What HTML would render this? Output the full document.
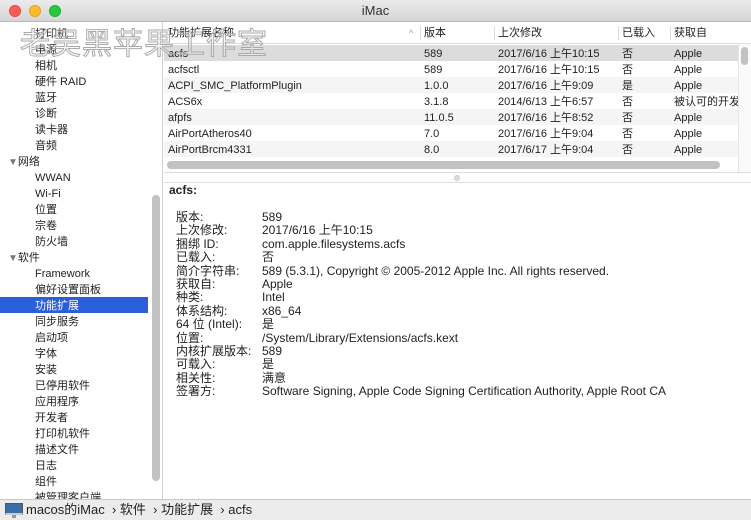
<!DOCTYPE html>
<html><head><meta charset="utf-8"><style>
*{margin:0;padding:0;box-sizing:border-box}
body{width:751px;height:520px;overflow:hidden;font-family:"Liberation Sans","Noto Sans CJK SC",sans-serif;font-size:11px;color:#222;background:#fff;position:relative}
.abs{position:absolute}
#title{left:0;top:0;width:751px;height:22px;background:linear-gradient(#ebebeb,#d6d6d6);border-bottom:1px solid #b8b8b8;text-align:center;line-height:22px;font-size:13px;color:#333;z-index:3}
.dot{position:absolute;top:5px;width:12px;height:12px;border-radius:6px}
#side{left:0;top:22px;width:163px;height:477px;background:#fff;border-right:1px solid #d0d0d0;overflow:hidden}
.si{position:absolute;left:35px;height:16px;line-height:16px;white-space:nowrap;padding-top:2px;line-height:14px}
.sh{left:8px}
.sel{left:0;width:148px;background:#2b5fd8;color:#fff;padding-left:35px}
#sthumb{left:152px;top:195px;width:8px;height:286px;border-radius:4px;background:#c2c2c2}
.cell{position:absolute;height:16px;line-height:16px;white-space:nowrap;overflow:hidden}
.row{position:absolute;left:164px;width:574px;height:16px}
.lab{position:absolute;left:176px;white-space:nowrap}
.val{position:absolute;left:262px;white-space:nowrap}
#wm{left:20px;top:19px;font-size:30px;letter-spacing:1px;color:rgba(255,255,255,0.3);-webkit-text-stroke:1px #aaa;z-index:4;font-family:"Noto Sans CJK SC",sans-serif}
#bar{left:0;top:499px;width:751px;height:21px;background:#ececec;border-top:1px solid #c8c8c8;font-size:13px;line-height:20px}
</style></head><body>
<div id="title" class="abs">iMac
<div class="dot" style="left:9px;background:#fc5f57;border:1px solid #df4742"></div>
<div class="dot" style="left:29px;background:#fdbc2e;border:1px solid #dea123"></div>
<div class="dot" style="left:49px;background:#28c840;border:1px solid #1eab2f"></div>
</div>
<div id="wm" class="abs">老吴黑苹果工作室</div>
<div id="side" class="abs">
<div class="si" style="top:3px">打印机</div>
<div class="si" style="top:19px">电源</div>
<div class="si" style="top:35px">相机</div>
<div class="si" style="top:51px">硬件 RAID</div>
<div class="si" style="top:67px">蓝牙</div>
<div class="si" style="top:83px">诊断</div>
<div class="si" style="top:99px">读卡器</div>
<div class="si" style="top:115px">音频</div>
<div class="si sh" style="top:131px"><span style="color:#777;font-size:10px">▼</span>网络</div>
<div class="si" style="top:147px">WWAN</div>
<div class="si" style="top:163px">Wi-Fi</div>
<div class="si" style="top:179px">位置</div>
<div class="si" style="top:195px">宗卷</div>
<div class="si" style="top:211px">防火墙</div>
<div class="si sh" style="top:227px"><span style="color:#777;font-size:10px">▼</span>软件</div>
<div class="si" style="top:243px">Framework</div>
<div class="si" style="top:259px">偏好设置面板</div>
<div class="si sel" style="top:275px">功能扩展</div>
<div class="si" style="top:291px">同步服务</div>
<div class="si" style="top:307px">启动项</div>
<div class="si" style="top:323px">字体</div>
<div class="si" style="top:339px">安装</div>
<div class="si" style="top:355px">已停用软件</div>
<div class="si" style="top:371px">应用程序</div>
<div class="si" style="top:387px">开发者</div>
<div class="si" style="top:403px">打印机软件</div>
<div class="si" style="top:419px">描述文件</div>
<div class="si" style="top:435px">日志</div>
<div class="si" style="top:451px">组件</div>
<div class="si" style="top:467px">被管理客户端</div>
</div>
<div id="sthumb" class="abs"></div>
<div class="abs" style="left:164px;top:23px;width:587px;height:21px;background:#fff;border-bottom:1px solid #ddd"></div>
<div class="cell" style="left:168px;top:25px">功能扩展名称</div>
<div class="cell" style="left:409px;top:25px;color:#999;font-size:9px">^</div>
<div class="abs" style="left:420px;top:26px;width:1px;height:14px;background:#ddd"></div>
<div class="cell" style="left:424px;top:25px">版本</div>
<div class="abs" style="left:494px;top:26px;width:1px;height:14px;background:#ddd"></div>
<div class="cell" style="left:498px;top:25px">上次修改</div>
<div class="abs" style="left:618px;top:26px;width:1px;height:14px;background:#ddd"></div>
<div class="cell" style="left:622px;top:25px">已载入</div>
<div class="abs" style="left:670px;top:26px;width:1px;height:14px;background:#ddd"></div>
<div class="cell" style="left:674px;top:25px">获取自</div>
<div class="row" style="top:45px;background:#dcdcdc"></div>
<div class="row" style="top:77px;background:#f5f5f5"></div>
<div class="row" style="top:109px;background:#f5f5f5"></div>
<div class="row" style="top:141px;background:#f5f5f5"></div>
<div style="position:absolute;left:0;top:46px;font-size:11px">
<div class="cell" style="left:168px;top:0">acfs</div><div class="cell" style="left:424px;top:0">589</div><div class="cell" style="left:498px;top:0">2017/6/16 上午10:15</div><div class="cell" style="left:622px;top:0">否</div><div class="cell" style="left:674px;top:0">Apple</div>
<div class="cell" style="left:168px;top:16px">acfsctl</div><div class="cell" style="left:424px;top:16px">589</div><div class="cell" style="left:498px;top:16px">2017/6/16 上午10:15</div><div class="cell" style="left:622px;top:16px">否</div><div class="cell" style="left:674px;top:16px">Apple</div>
<div class="cell" style="left:168px;top:32px">ACPI_SMC_PlatformPlugin</div><div class="cell" style="left:424px;top:32px">1.0.0</div><div class="cell" style="left:498px;top:32px">2017/6/16 上午9:09</div><div class="cell" style="left:622px;top:32px">是</div><div class="cell" style="left:674px;top:32px">Apple</div>
<div class="cell" style="left:168px;top:48px">ACS6x</div><div class="cell" style="left:424px;top:48px">3.1.8</div><div class="cell" style="left:498px;top:48px">2014/6/13 上午6:57</div><div class="cell" style="left:622px;top:48px">否</div><div class="cell" style="left:674px;top:48px;width:64px">被认可的开发者</div>
<div class="cell" style="left:168px;top:64px">afpfs</div><div class="cell" style="left:424px;top:64px">11.0.5</div><div class="cell" style="left:498px;top:64px">2017/6/16 上午8:52</div><div class="cell" style="left:622px;top:64px">否</div><div class="cell" style="left:674px;top:64px">Apple</div>
<div class="cell" style="left:168px;top:80px">AirPortAtheros40</div><div class="cell" style="left:424px;top:80px">7.0</div><div class="cell" style="left:498px;top:80px">2017/6/16 上午9:04</div><div class="cell" style="left:622px;top:80px">否</div><div class="cell" style="left:674px;top:80px">Apple</div>
<div class="cell" style="left:168px;top:96px">AirPortBrcm4331</div><div class="cell" style="left:424px;top:96px">8.0</div><div class="cell" style="left:498px;top:96px">2017/6/17 上午9:04</div><div class="cell" style="left:622px;top:96px">否</div><div class="cell" style="left:674px;top:96px">Apple</div>
</div>
<div class="abs" style="left:738px;top:44px;width:13px;height:130px;background:#fafafa;border-left:1px solid #e6e6e6"></div>
<div class="abs" style="left:741px;top:47px;width:7px;height:18px;border-radius:4px;background:#c2c2c2"></div>
<div class="abs" style="left:167px;top:161px;width:553px;height:8px;border-radius:4px;background:#c2c2c2"></div>
<div class="abs" style="left:164px;top:172px;width:587px;height:1px;background:#ddd"></div>
<div class="abs" style="left:164px;top:182px;width:587px;height:1px;background:#ddd"></div>
<div class="abs" style="left:454px;top:175px;width:6px;height:6px;border-radius:3px;background:#ddd;border:1px solid #ccc"></div>
<div class="abs" style="left:169px;top:183px;font-weight:bold;font-size:12px">acfs:</div>
<div style="position:absolute;left:0;top:211px;line-height:13.4px;font-size:12px">
<div class="lab" style="top:0">版本:</div><div class="val" style="top:0">589</div>
<div class="lab" style="top:13.4px">上次修改:</div><div class="val" style="top:13.4px">2017/6/16 上午10:15</div>
<div class="lab" style="top:26.8px">捆绑 ID:</div><div class="val" style="top:26.8px">com.apple.filesystems.acfs</div>
<div class="lab" style="top:40.2px">已载入:</div><div class="val" style="top:40.2px">否</div>
<div class="lab" style="top:53.6px">简介字符串:</div><div class="val" style="top:53.6px">589 (5.3.1), Copyright © 2005-2012 Apple Inc. All rights reserved.</div>
<div class="lab" style="top:67px">获取自:</div><div class="val" style="top:67px">Apple</div>
<div class="lab" style="top:80.4px">种类:</div><div class="val" style="top:80.4px">Intel</div>
<div class="lab" style="top:93.8px">体系结构:</div><div class="val" style="top:93.8px">x86_64</div>
<div class="lab" style="top:107.2px">64 位 (Intel):</div><div class="val" style="top:107.2px">是</div>
<div class="lab" style="top:120.6px">位置:</div><div class="val" style="top:120.6px">/System/Library/Extensions/acfs.kext</div>
<div class="lab" style="top:134px">内核扩展版本:</div><div class="val" style="top:134px">589</div>
<div class="lab" style="top:147.4px">可载入:</div><div class="val" style="top:147.4px">是</div>
<div class="lab" style="top:160.8px">相关性:</div><div class="val" style="top:160.8px">满意</div>
<div class="lab" style="top:174.2px">签署方:</div><div class="val" style="top:174.2px">Software Signing, Apple Code Signing Certification Authority, Apple Root CA</div>
</div>
<div id="bar" class="abs">
<svg style="position:absolute;left:5px;top:3px" width="18" height="16"><rect x="0.5" y="0.5" width="17" height="11" fill="#3a6ea8" stroke="#555"/><rect x="0.5" y="10" width="17" height="2" fill="#ccc"/><rect x="7" y="12" width="4" height="3" fill="#999"/></svg>
<span style="position:absolute;left:26px">macos的iMac &nbsp;› 软件 &nbsp;› 功能扩展 &nbsp;› acfs</span>
</div>
</body></html>
